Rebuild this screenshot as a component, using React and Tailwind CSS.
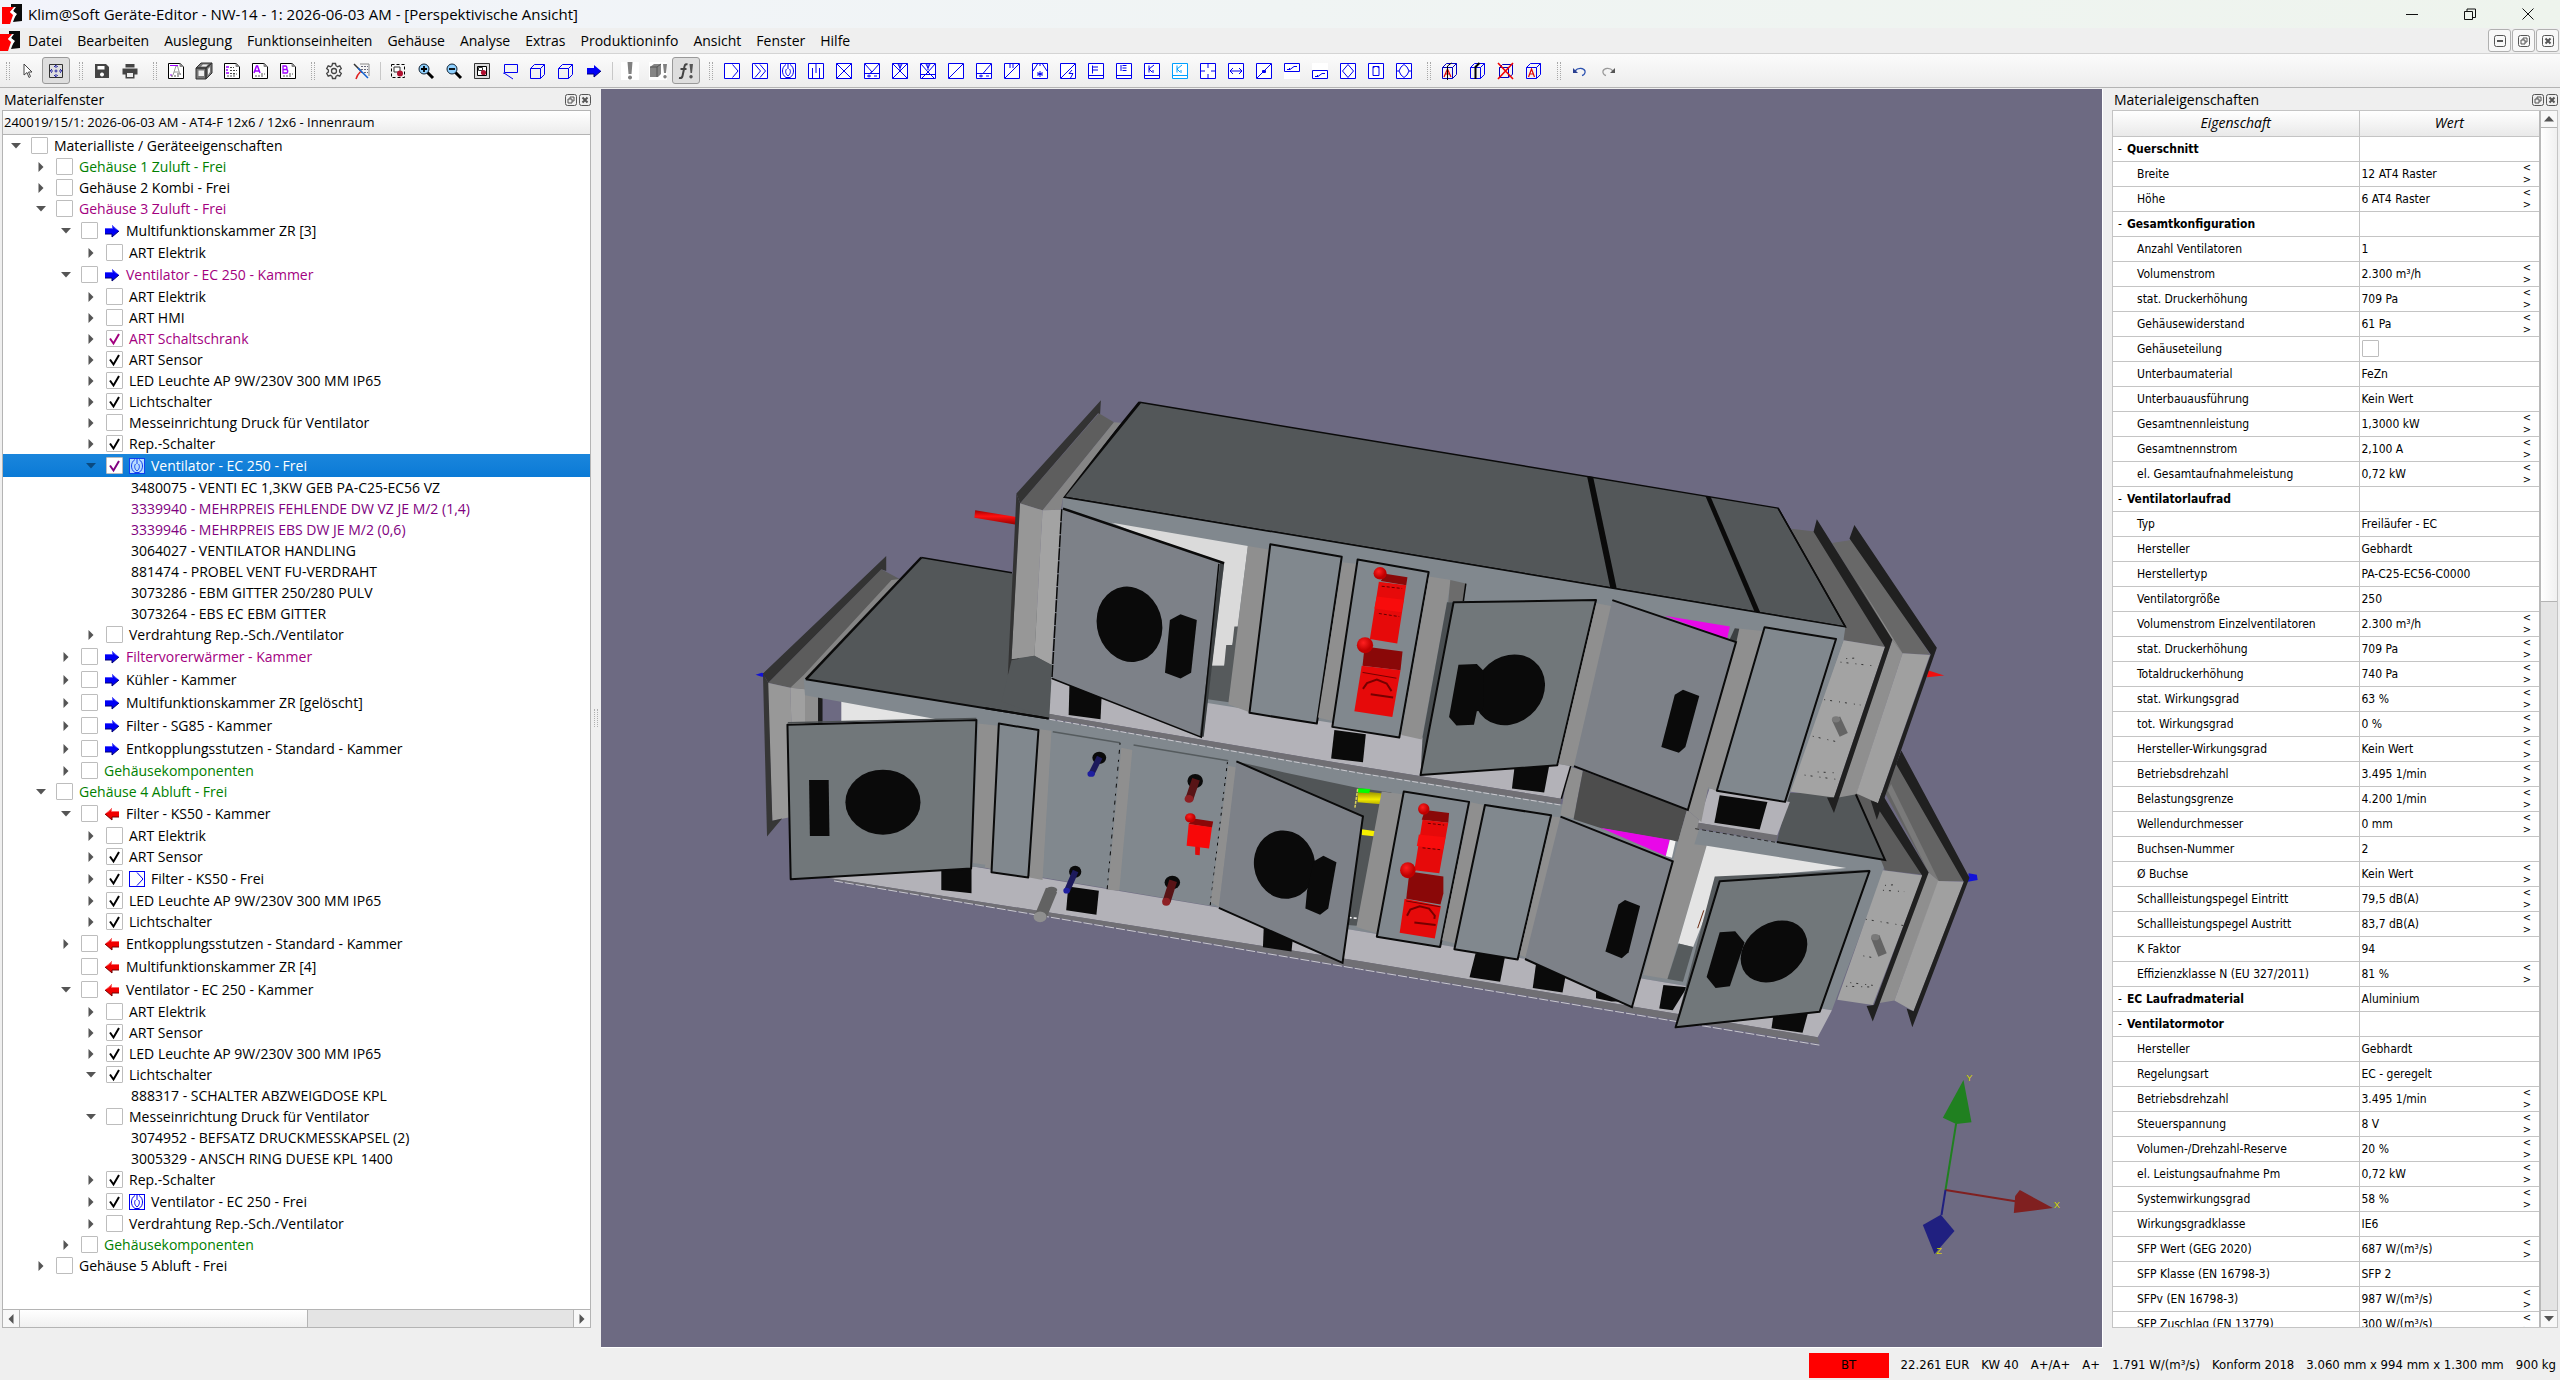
import React from "react";

const UI = "font-['Open_Sans','Noto_Sans',sans-serif]";
const TAHOMA = "font-['DejaVu_Sans_Condensed','DejaVu_Sans',sans-serif]";

/* ---------- tree ---------- */
const G = "text-[#008000]";
const P = "text-[#a3007f]";
const V = "text-[#800080]";

// level, text, options: a = arrow (o open, c closed), k = checked, i = icon, c = colour
const TREE = [
  [0, "Materialliste / Geräteeigenschaften", { a: "o" }],
  [1, "Gehäuse 1 Zuluft - Frei", { a: "c", c: G }],
  [1, "Gehäuse 2 Kombi - Frei", { a: "c" }],
  [1, "Gehäuse 3 Zuluft - Frei", { a: "o", c: P }],
  [2, "Multifunktionskammer ZR [3]", { a: "o", i: "right" }],
  [3, "ART Elektrik", { a: "c" }],
  [2, "Ventilator - EC 250 - Kammer", { a: "o", i: "right", c: P }],
  [3, "ART Elektrik", { a: "c" }],
  [3, "ART HMI", { a: "c" }],
  [3, "ART Schaltschrank", { a: "c", k: 1, c: P }],
  [3, "ART Sensor", { a: "c", k: 1 }],
  [3, "LED Leuchte AP 9W/230V 300 MM IP65", { a: "c", k: 1 }],
  [3, "Lichtschalter", { a: "c", k: 1 }],
  [3, "Messeinrichtung Druck für Ventilator", { a: "c" }],
  [3, "Rep.-Schalter", { a: "c", k: 1 }],
  [3, "Ventilator - EC 250 - Frei", { a: "o", k: 1, i: "fan", sel: 1 }],
  [4, "3480075 - VENTI EC 1,3KW GEB PA-C25-EC56 VZ", { leaf: 1 }],
  [4, "3339940 - MEHRPREIS FEHLENDE DW VZ JE M/2 (1,4)", { leaf: 1, c: V }],
  [4, "3339946 - MEHRPREIS EBS DW JE M/2 (0,6)", { leaf: 1, c: V }],
  [4, "3064027 - VENTILATOR HANDLING", { leaf: 1 }],
  [4, "881474 - PROBEL VENT FU-VERDRAHT", { leaf: 1 }],
  [4, "3073286 - EBM GITTER 250/280 PULV", { leaf: 1 }],
  [4, "3073264 - EBS EC EBM GITTER", { leaf: 1 }],
  [3, "Verdrahtung Rep.-Sch./Ventilator", { a: "c" }],
  [2, "Filtervorerwärmer - Kammer", { a: "c", i: "right", c: P }],
  [2, "Kühler - Kammer", { a: "c", i: "right" }],
  [2, "Multifunktionskammer ZR [gelöscht]", { a: "c", i: "right" }],
  [2, "Filter - SG85 - Kammer", { a: "c", i: "right" }],
  [2, "Entkopplungsstutzen - Standard - Kammer", { a: "c", i: "right" }],
  [2, "Gehäusekomponenten", { a: "c", c: G }],
  [1, "Gehäuse 4 Abluft - Frei", { a: "o", c: G }],
  [2, "Filter - KS50 - Kammer", { a: "o", i: "left" }],
  [3, "ART Elektrik", { a: "c" }],
  [3, "ART Sensor", { a: "c", k: 1 }],
  [3, "Filter - KS50 - Frei", { a: "c", k: 1, i: "filter" }],
  [3, "LED Leuchte AP 9W/230V 300 MM IP65", { a: "c", k: 1 }],
  [3, "Lichtschalter", { a: "c", k: 1 }],
  [2, "Entkopplungsstutzen - Standard - Kammer", { a: "c", i: "left" }],
  [2, "Multifunktionskammer ZR [4]", { i: "left" }],
  [2, "Ventilator - EC 250 - Kammer", { a: "o", i: "left" }],
  [3, "ART Elektrik", { a: "c" }],
  [3, "ART Sensor", { a: "c", k: 1 }],
  [3, "LED Leuchte AP 9W/230V 300 MM IP65", { a: "c", k: 1 }],
  [3, "Lichtschalter", { a: "o", k: 1 }],
  [4, "888317 - SCHALTER ABZWEIGDOSE KPL", { leaf: 1 }],
  [3, "Messeinrichtung Druck für Ventilator", { a: "o" }],
  [4, "3074952 - BEFSATZ DRUCKMESSKAPSEL (2)", { leaf: 1 }],
  [4, "3005329 - ANSCH RING DUESE KPL 1400", { leaf: 1 }],
  [3, "Rep.-Schalter", { a: "c", k: 1 }],
  [3, "Ventilator - EC 250 - Frei", { a: "c", k: 1, i: "fan" }],
  [3, "Verdrahtung Rep.-Sch./Ventilator", { a: "c" }],
  [2, "Gehäusekomponenten", { a: "c", c: G }],
  [1, "Gehäuse 5 Abluft - Frei", { a: "c" }],
];

const INDENT = ["pl-[1px]", "pl-[26px]", "pl-[51px]", "pl-[76px]", "pl-[128px]"];

function Tri({ dir, className = "fill-[#555]" }) {
  const d = { d: "M1 3h10L6 8.5z", r: "M3.5 1v10L8.5 6z", l: "M8.5 1v10L3.5 6z", u: "M1 8.5h10L6 3z" }[dir];
  return (
    <svg viewBox="0 0 12 12" className={"size-3 shrink-0 " + className}>
      <path d={d} />
    </svg>
  );
}

const FAN = "M6 1.500C3.500 3 2.500 5.500 2.500 8s1 5 3.500 6.500h4c2.500-1.500 3.500-4 3.500-6.500s-1-5-3.500-6.500M8 1v5M6.500 6C5 8 5.500 11 8 13c2.500-2 3-5 1.500-7";

function TreeIcon({ kind, sel }) {
  if (kind === "right" || kind === "left") {
    const c = kind === "right" ? ["#0000f5", "#000070", "#6a6aff"] : ["#f00000", "#700000", "#ff8080"];
    return (
      <svg viewBox="0 0 16 16" className="mr-[6px] size-4 shrink-0">
        <g transform={kind === "left" ? "matrix(-1 0 0 1 16 0)" : undefined}>
          <path d="M1 5h7V2l7 6-7 6v-3H1z" fill={c[0]} />
          <path d="M1 11h7v3l7-6" fill="none" stroke={c[1]} />
          <path d="M1 5.5h7.5V3l4 3.5" fill="none" stroke={c[2]} strokeWidth=".8" />
        </g>
      </svg>
    );
  }
  return (
    <svg viewBox="0 0 16 16" className="mr-[6px] size-4 shrink-0" fill="none" stroke={sel ? "#1040f0" : "#0000f0"}>
      <rect x=".5" y=".5" width="15" height="15" fill={sel ? "#b8dcff" : "#fff"} />
      {kind === "fan" ? <path d={FAN} /> : <path d="M8 1.5 14 8l-6 6.5" />}
    </svg>
  );
}

function Check({ checked, color, label }) {
  return (
    <span className="grid shrink-0">
      <input
        type="checkbox"
        defaultChecked={!!checked}
        aria-label={label}
        className="size-[17px] appearance-none rounded-[1px] border border-[#bdbdbd] bg-white [grid-area:1/1]"
      />
      {checked ? (
        <svg viewBox="0 0 17 17" className={"pointer-events-none size-[17px] [grid-area:1/1] " + color}>
          <path d="M4 8.5 7.5 13.5 13 4" fill="none" stroke="currentColor" strokeWidth="2" />
        </svg>
      ) : null}
    </span>
  );
}

function TreeRow({ row }) {
  const [lvl, text, o] = row;
  const h = o.i ? "h-[23px]" : "h-[21px]";
  return (
    <li
      className={
        "flex items-center whitespace-pre " + h + " " + INDENT[lvl] + " " +
        (o.sel ? "bg-gradient-to-b from-[#1a86dc] to-[#0a7ad6] text-white" : o.c || "text-black")
      }
    >
      {!o.leaf && (
        <>
          <span className="mr-[10px] flex w-[17px] justify-center pl-[6px]">
            {o.a && <Tri dir={o.a === "o" ? "d" : "r"} className={o.sel ? "fill-[#0a4a80]" : "fill-[#555]"} />}
          </span>
          <Check checked={o.k} label={text} color={o.c || (o.sel ? "text-[#800080]" : "text-black")} />
          <span className="w-[6px] shrink-0" />
          {o.i && <TreeIcon kind={o.i} sel={o.sel} />}
        </>
      )}
      <span>{text}</span>
    </li>
  );
}

/* ---------- properties: name, value, spinner ---------- */
const PROPS = [
  ["#Querschnitt", ""],
  ["Breite", "12 AT4 Raster", 1],
  ["Höhe", "6 AT4 Raster", 1],
  ["#Gesamtkonfiguration", ""],
  ["Anzahl Ventilatoren", "1"],
  ["Volumenstrom", "2.300 m³/h", 1],
  ["stat. Druckerhöhung", "709 Pa", 1],
  ["Gehäusewiderstand", "61 Pa", 1],
  ["Gehäuseteilung", "[]"],
  ["Unterbaumaterial", "FeZn"],
  ["Unterbauausführung", "Kein Wert"],
  ["Gesamtnennleistung", "1,3000 kW", 1],
  ["Gesamtnennstrom", "2,100 A", 1],
  ["el. Gesamtaufnahmeleistung", "0,72 kW", 1],
  ["#Ventilatorlaufrad", ""],
  ["Typ", "Freiläufer - EC"],
  ["Hersteller", "Gebhardt"],
  ["Herstellertyp", "PA-C25-EC56-C0000"],
  ["Ventilatorgröße", "250"],
  ["Volumenstrom Einzelventilatoren", "2.300 m³/h", 1],
  ["stat. Druckerhöhung", "709 Pa", 1],
  ["Totaldruckerhöhung", "740 Pa", 1],
  ["stat. Wirkungsgrad", "63 %", 1],
  ["tot. Wirkungsgrad", "0 %", 1],
  ["Hersteller-Wirkungsgrad", "Kein Wert", 1],
  ["Betriebsdrehzahl", "3.495 1/min", 1],
  ["Belastungsgrenze", "4.200 1/min", 1],
  ["Wellendurchmesser", "0 mm", 1],
  ["Buchsen-Nummer", "2"],
  ["Ø Buchse", "Kein Wert", 1],
  ["Schallleistungspegel Eintritt", "79,5 dB(A)", 1],
  ["Schallleistungspegel Austritt", "83,7 dB(A)", 1],
  ["K Faktor", "94"],
  ["Effizienzklasse N (EU 327/2011)", "81 %", 1],
  ["#EC Laufradmaterial", "Aluminium"],
  ["#Ventilatormotor", ""],
  ["Hersteller", "Gebhardt"],
  ["Regelungsart", "EC - geregelt"],
  ["Betriebsdrehzahl", "3.495 1/min", 1],
  ["Steuerspannung", "8 V", 1],
  ["Volumen-/Drehzahl-Reserve", "20 %", 1],
  ["el. Leistungsaufnahme Pm", "0,72 kW", 1],
  ["Systemwirkungsgrad", "58 %", 1],
  ["Wirkungsgradklasse", "IE6"],
  ["SFP Wert (GEG 2020)", "687 W/(m³/s)", 1],
  ["SFP Klasse (EN 16798-3)", "SFP 2"],
  ["SFPv (EN 16798-3)", "987 W/(m³/s)", 1],
  ["SFP Zuschlag (EN 13779)", "300 W/(m³/s)", 1],
];

function PropTable() {
  return (
    <table className={"w-full table-fixed border-collapse text-[12px] leading-[24px] " + TAHOMA}>
      <colgroup>
        <col className="w-[246px]" />
        <col />
      </colgroup>
      <thead>
        <tr className={"h-[25px] bg-gradient-to-b from-white to-[#e9e9e9] text-[14px] italic " + UI}>
          <th className="border-r border-b border-[#c4c4c4] p-0 font-normal">Eigenschaft</th>
          <th className="border-b border-[#c4c4c4] p-0 font-normal">Wert</th>
        </tr>
      </thead>
      <tbody>
        {PROPS.map(([n, v, s], i) => {
          const head = n[0] === "#";
          return (
            <tr key={i} className="h-[25px] border-b border-[#c4c4c4]">
              <th scope="row" className="border-r border-[#c4c4c4] p-0 text-left font-normal whitespace-nowrap">
                {head ? (
                  <span className="flex gap-[5px] pl-[5px]">
                    <span>-</span>
                    <b>{n.slice(1)}</b>
                  </span>
                ) : (
                  <span className="block pl-[24px]">{n}</span>
                )}
              </th>
              <td className="p-0 whitespace-nowrap">
                <div className="flex h-[24px] items-center justify-between pr-[7px] pl-[2px]">
                  {v === "[]" ? <Check label={n} /> : <span>{v}</span>}
                  {s && (
                    <span className="flex w-[10px] flex-col text-[11px] leading-[12px]">
                      <button aria-label={n + " verringern"}>&lt;</button>
                      <button aria-label={n + " erhöhen"}>&gt;</button>
                    </span>
                  )}
                </div>
              </td>
            </tr>
          );
        })}
      </tbody>
    </table>
  );
}

/* ---------- toolbar icons ---------- */
const BOX = "M.5.5h15v15H.5z";
const BLUE = [
  BOX + "M8.500 1.500 14 8l-5.500 6.500",
  BOX + "M3 1.500 8.500 8 3 14.500M8 1.500 13.500 8 8 14.500",
  BOX + FAN,
  BOX + "M4.500 8v7M8 1v9M11.500 8v7M4.500 8V5M11.500 8V5",
  BOX + "M.5.5l15 15M15.500.5l-15 15",
  BOX + "M1 1l7 8 7-8M8 9l-2.500 1.500M1 10.500h14M3 13h4M5 11.500v3M10 13h3",
  BOX + "M.5.5l15 15M15.500.5l-15 15M6 1l2 4 2-4M8 1v6",
  BOX + "M1 1l7 8 7-8M8 9l-6 6M8 9l6 6M1 11.500h14M6 1l2 4 2-4M8 1v6",
  BOX + "M15 1L1 15",
  BOX + "M15 1L7 10.500M1 10.500h14M3 13h4M5 11.500v3M10 13h3",
  BOX + "M15 1L1 15M6 1v4M9 1v4",
  BOX + "M5.500 1 1 8M10.500 1 15 8M8 1v2M8 8v6M5.500 9.500l5 3M10.500 9.500l-5 3M5 11h6",
  BOX + "M15 1L1 15M12 7l-3 3.500h4L10.500 15",
  BOX + "M1 12.500h14M4.500 2.500v8M4.500 4H10M4.500 7H10",
  BOX + "M1 12.500h14M6.500 2.500h4M6.500 5h4M6.500 7.500h4M5 2v6",
  BOX + "M1 12.500h14M5 2.500v7M5 6l5-4M5 6l3 3M9 7v3",
  BOX + "M1 12.500h14M5 2.500v7M5 6l5-4M5 6l3 3M9 7v3",
  BOX + "M8 1v4M8 11v4M1 8h4M11 8h4",
  BOX + "M2 8h12M5 5 2 8l3 3M11 5l3 3-3 3",
  BOX + "M15 1L1 15M6.500 7.500h3v2h-3zM7 8.500h2",
  "M.5.5h15v8H.5zM3 6.500h3L10 3.500h3M5 6l1-1",
  "M.5 7.500h15v8H.5zM3 13.500h3L10 10.500h3M5 13l1-1",
  BOX + "M8 1.500 13.500 8 8 14.500 2.500 8z",
  BOX + "M5 3.500h6v9H5zM5 5l2-1.500M11 5 9 3.500",
  BOX + "M8 1.500 5 4 3 8l2 4 3 2.500L11 12l2-4-2-4zM1 8h2M13 8h2",
];

const S = ({ children, ...p }) => (
  <svg viewBox="0 0 18 18" className="size-[18px]" fill="none" {...p}>
    {children}
  </svg>
);

const Doc = ({ letter, gray }) => (
  <S>
    <path d="M1.500 1.500h12l3 3v12h-15z" fill="#fff" stroke="#000" />
    <path d="M13 1.500v3h3.500z" fill="#888" stroke="#888" />
    {letter === "A" && <path d="M3 11 5.500 4h1L9 11M4 9h4" stroke="#a000ff" strokeWidth="1.500" />}
    {letter === "B" && <path d="M4 11V4h3q2 2 0 3.500H4h4q1.500 2 0 3.500z" stroke="#a000ff" strokeWidth="1.300" />}
    {gray && <path d="M6 13l3-9h1.500L13 13M7 10h5" stroke="#999" />}
    {gray && <path d="M3 3.500h8M3 13h2" stroke="#a000ff" />}
    {!letter && !gray && <path d="M3 5h3M3 8h2M3 11h3" stroke="#a000ff" strokeWidth="1.500" />}
    {!letter && !gray && <path d="M7 5.500h4M7 8.500h7M7 11.500h6" stroke="#444" strokeDasharray="2 1" />}
    <path d="M4 14h9M10 12h4" stroke="#555" strokeDasharray="2 1" />
  </S>
);

const Cube = ({ stroke = "#0000f0", ...p }) => (
  <S {...p}>
    <path d="M1.500 6.500h10v10h-10zM1.500 6.500l4-4h10v10l-4 4M11.500 6.500l4-4" stroke={stroke} />
  </S>
);

const Glass = ({ plus }) => (
  <S>
    <path d="M10.500 10.500 16 16" stroke="#000" strokeWidth="3" />
    <circle cx="7" cy="7" r="5" fill="#8ed0ff" stroke="#123" />
    <path d={plus ? "M4 7h6M7 4v6" : "M4 7h6"} stroke="#000" strokeWidth="1.800" />
  </S>
);

const ICONS = {
  cursor: <S><path d="M5 2v11l3-2.500 2 5 1.500-1-2-4.500h3.500z" fill="#fff" stroke="#444" /></S>,
  move: <S><path d="M2.500 2.500h13v13h-13z" stroke="#333" /><path d="M9 3v12M3 9h12M7 5l2-2 2 2M7 13l2 2 2-2M5 7 3 9l2 2M13 7l2 2-2 2" stroke="#2222a0" strokeDasharray="3 1.500" /></S>,
  save: <S><path d="M2 2h11l3 3v11H2z" fill="#444" /><path d="M4.500 4h7v3.500h-7zM9 10.500a2 2 0 1 0 .01 0" fill="#fff" /></S>,
  print: <S><path d="M4.500 2h9v3.500h-9zM1.500 6.500h15v6h-3v4h-9v-4h-3z" fill="#444" /><path d="M6 11h6v4H6z" fill="#eee" /></S>,
  solid: <S><path d="M1 6h10v11H1zM1 6l5-5h11l-6 5zM11 17V6l6-5v10z" fill="#777" stroke="#333" /><path d="M3.500 8.500H9V14H3.500zM6 4.500l2-2h5l-2 2zM13 13V7l2-2v5z" fill="#eee" /></S>,
  gear: <S stroke="#444" strokeWidth="1.300"><path d="M7.500 1.500h3l.5 2.200 1.600 1 2.200-.8 1.500 2.600-1.700 1.500v2l1.700 1.500-1.500 2.600-2.200-.8-1.600 1-.5 2.200h-3L7 14.300l-1.600-1-2.200.8-1.500-2.600L3.400 10V8L1.700 6.500l1.500-2.600 2.200.8 1.600-1z" /><circle cx="9" cy="9" r="2.500" /></S>,
  wires: <S><path d="M7 2h9v12" stroke="#888" /><path d="M8 4.500h7M8 7.500h7M8 10.500h7" stroke="#667" strokeDasharray="2 1" /><path d="M1 2l7 7" stroke="#333" strokeWidth="1.500" /><path d="M8 9c-2 2-4 4-5 8" stroke="#e02020" strokeWidth="1.500" /><path d="M5 6l10 10" stroke="#1060d0" strokeWidth="1.500" /></S>,
  fit: <S><path d="M2.500 2.500h13v13h-13z" stroke="#000" strokeDasharray="3 2" /><path d="M5 5h6v5H5z" fill="#fff" stroke="#333" /><circle cx="11" cy="11.500" r="3" fill="#b01030" /></S>,
  sheet: <S><path d="M1.500 1.500h15v15h-15z" fill="#ddd" stroke="#333" /><path d="M4.500 4.500h9v9h-9z" fill="#fff" stroke="#000" /><path d="M5.500 5.500h4v3h-4z" fill="#fff" stroke="#333" /><circle cx="10.500" cy="10.500" r="2.600" fill="#b01030" /></S>,
  plane: <S stroke="#0000f0"><path d="M3.500 2.500h13v8h-13zM3 11l9 6M3 10.500v1.500" /></S>,
  arrow: <S><path d="M2 6h7V3l7 6-7 6v-3H2z" fill="#0000f5" /><path d="M2 12h7v3l7-6" stroke="#000070" /></S>,
  bang: <S><path d="M0 0h18v18H0z" fill="#fff" /><path d="M6.500 0h5l-1 12H7.500zM9 13.500a2 2 0 1 0 .01 0" fill="#808080" /></S>,
  cubebang: <S><path d="M0 0h18v18H0z" fill="#fff" /><path d="M1 5l4-3h7v10l-3 3H1z" fill="#858585" /><path d="M1 5h7v10M8 5l4-3" stroke="#555" /><path d="M14 2h4l-1 9h-2zM16 13a1.700 1.700 0 1 0 .01 0" fill="#808080" /></S>,
  fbang: <S><path d="M10.500 2.500C8 1.500 7.500 3.500 7 7L5.500 14q-.5 2.500-3.500 2M3.500 7h6" stroke="#444" strokeWidth="2" /><path d="M12.500 2h3.500l-1 9h-1.500zM14 13a1.700 1.700 0 1 0 .01 0" fill="#555" /></S>,
  ca: <S><path d="M1.500 5.500h10v11h-10zM1.500 5.500l4-4h10v11l-4 4M11.500 5.500l4-4" stroke="#0000c0" /><path d="M3 15 6.500 7 10 15M4 12h5" stroke="#e00000" strokeWidth="1.200" /><path d="M6.500 4v14M6.500 4l4-3" stroke="#000" /></S>,
  cb: <S><path d="M1.500 5.500h10v11h-10zM1.500 5.500l4-4h10v11l-4 4M11.500 5.500l4-4" stroke="#0000f0" /><path d="M6.500 17V5l4-4" stroke="#000" strokeWidth="2" /></S>,
  cx: <S><path d="M2.500 5.500h9v10h-9zM2.500 5.500l3-3h10v10l-4 3" stroke="#0000c0" /><path d="M1 1l15 16M16 1 1 17" stroke="#f00000" strokeWidth="1.600" /></S>,
  cr: <S><path d="M1.500 5.500h10v11h-10zM1.500 5.500l4-4h10v11l-4 4M11.500 5.500l4-4" stroke="#0000f0" /><path d="M3.500 15 6.500 7 9.500 15M4.500 12h4" stroke="#e00000" strokeWidth="1.200" /></S>,
  undo: <S><path d="M4 9c3-4 9-3 10 0 .5 2-1 4-3 4.500" stroke="#2a50b0" strokeWidth="1.300" /><path d="M2 6v5h5z" fill="#2a3f90" /></S>,
  redo: <S><path d="M14 9C11 5 5 6 4 9c-.5 2 1 4 3 4.500" stroke="#999" strokeWidth="1.300" /><path d="M16 6v5h-5z" fill="#555" /></S>,
};

const Tool = ({ label, active, children }) => (
  <button
    aria-label={label}
    className={
      "flex h-[27px] w-[28px] shrink-0 items-center justify-center " +
      (active ? "rounded-[3px] border border-[#9a9a9a] bg-[#dedede]" : "")
    }
  >
    {children}
  </button>
);

const Grip = () => (
  <span className="flex w-[18px] shrink-0 justify-end pr-[5px]">
    <span className="h-[18px] w-[4px] border-x border-dotted border-[#a8a8a8]" />
  </span>
);
const Sep = () => (
  <span className="flex w-[8px] shrink-0 justify-center">
    <span className="h-[18px] w-px bg-[#c8c8c8]" />
  </span>
);

function Toolbar() {
  return (
    <div className="flex h-[35px] shrink-0 items-center overflow-hidden border-t border-b border-t-[#d4d4d4] border-b-[#b4b4b4] bg-gradient-to-b from-[#fbfbfb] to-[#ededed]">
      <span className="flex w-[14px] shrink-0 justify-end pr-[4px]">
        <span className="h-[18px] w-[4px] border-x border-dotted border-[#a8a8a8]" />
      </span>
      <Tool label="Auswahl">{ICONS.cursor}</Tool>
      <Tool label="Verschieben" active>{ICONS.move}</Tool>
      <Grip />
      <Tool label="Speichern">{ICONS.save}</Tool>
      <Tool label="Drucken">{ICONS.print}</Tool>
      <Grip />
      <Tool label="Deckblatt"><Doc gray /></Tool>
      <Tool label="Modell">{ICONS.solid}</Tool>
      <Tool label="Liste"><Doc /></Tool>
      <Tool label="Dokument A"><Doc letter="A" /></Tool>
      <Tool label="Dokument B"><Doc letter="B" /></Tool>
      <Grip />
      <Tool label="Einstellungen">{ICONS.gear}</Tool>
      <Tool label="Verdrahtung">{ICONS.wires}</Tool>
      <Sep />
      <Tool label="Einpassen">{ICONS.fit}</Tool>
      <Tool label="Vergrößern"><Glass plus /></Tool>
      <Tool label="Verkleinern"><Glass /></Tool>
      <Tool label="Blatt">{ICONS.sheet}</Tool>
      <Tool label="Ebene">{ICONS.plane}</Tool>
      <Tool label="Quader links"><Cube /></Tool>
      <Tool label="Quader rechts"><Cube /></Tool>
      <Tool label="Richtung">{ICONS.arrow}</Tool>
      <Sep />
      <Tool label="Hinweis">{ICONS.bang}</Tool>
      <Tool label="Geometriehinweis">{ICONS.cubebang}</Tool>
      <Tool label="Funktionshinweis" active>{ICONS.fbang}</Tool>
      <Grip />
      {BLUE.map((d, i) => (
        <Tool key={i} label={"Funktionseinheit " + (i + 1)}>
          <svg viewBox="0 0 16 16" className="size-4" fill="none" stroke={i === 16 ? "#00a0ff" : "#0000f0"}>
            <path d="M0 0h16v16H0z" fill="#fff" stroke="none" />
            <path d={d} />
          </svg>
        </Tool>
      ))}
      <Grip />
      <Tool label="Gehäuse A">{ICONS.ca}</Tool>
      <Tool label="Gehäuse teilen">{ICONS.cb}</Tool>
      <Tool label="Gehäuse löschen">{ICONS.cx}</Tool>
      <Tool label="Gehäuse R">{ICONS.cr}</Tool>
      <Grip />
      <Tool label="Rückgängig">{ICONS.undo}</Tool>
      <Tool label="Wiederholen">{ICONS.redo}</Tool>
    </div>
  );
}

/* ---------- 3D view ---------- */
const F = ({ p, c, s, w = 2 }) => (
  <polygon points={p} fill={c} stroke={s} strokeWidth={s ? w : 0} vectorEffect="non-scaling-stroke" strokeLinejoin="round" />
);
const L = ({ p, s = "#0a0a0a", w = 1.5, d }) => (
  <polyline points={p} fill="none" stroke={s} strokeWidth={w} strokeDasharray={d} vectorEffect="non-scaling-stroke" />
);
const E = ({ x, y, rx, ry, r = 0, c = "#0a0a0a" }) => (
  <ellipse cx={x} cy={y} rx={rx} ry={ry} fill={c} transform={`rotate(${r} ${x} ${y})`} />
);
const BK = "#0a0a0a";
const FACE = "#81888e";
const DOOR = "#7d8188";
const DOORW = "#71777a";
const ROOF = "#535759";
const POST = "#8f8f8f";
const BASE = "#b3b2b8";
const RAIL = "#706f74";
const WHITE = "#e4e4e4";

// Left half and right half of the device use their own drawing grids.
const Left = ({ children }) => <g transform="translate(140 291) scale(.408163 .357143)">{children}</g>;
const Right = ({ children }) => <g transform="translate(760 291) scale(.408163 .446429)">{children}</g>;

const Dots = ({ list }) => list.map((p, i) => <L key={i} p={p} s="#333" w={1} d="1 5 2 7" />);

function Scene() {
  return (
    <svg viewBox="0 0 1502 1258" preserveAspectRatio="xMidYMid slice" className="block size-full" role="img" aria-label="Perspektivische Ansicht">
      <defs>
        <linearGradient id="redPipe" x1="0" y1="0" x2="0" y2="1">
          <stop offset="0" stopColor="#a00000" />
          <stop offset=".4" stopColor="#ff1010" />
          <stop offset="1" stopColor="#900000" />
        </linearGradient>
        <linearGradient id="yellowPipe" x1="0" y1="0" x2="0" y2="1">
          <stop offset="0" stopColor="#8c8600" />
          <stop offset=".6" stopColor="#f2ea00" />
          <stop offset="1" stopColor="#b0a800" />
        </linearGradient>
        <radialGradient id="ball" cx=".4" cy=".35">
          <stop offset="0" stopColor="#ff2020" />
          <stop offset="1" stopColor="#c00000" />
        </radialGradient>
      </defs>

      <Left>
        {/* lower left connection */}
        <F p="37,825 52,820 66,822 66,834 50,830" c="#1212d8" />
        <F p="68,848 345,530 390,557 165,835 158,866 122,862" c="#5c5c5c" />
        <F p="122,862 155,826 370,560 390,557 165,835 158,866" c="#858585" />
        <F p="55,822 357,493 357,535 345,530 68,848" c="#333" />
        <F p="66,848 122,862 125,970 118,1225 78,1234" c="#989898" />
        <F p="122,862 158,866 158,970 125,970" c="#a0a0a0" />
        <F p="158,880 190,886 190,962 158,964" c={POST} />
        <F p="190,886 201,888 201,960 190,962" c="#1c1c1c" />
        <F p="55,822 68,848 78,1234 102,1228 65,1278" c="#363636" />
        <F p="247,897 505,948 247,958" c={WHITE} />
        <F p="160,838 443,497 665,540 760,700 770,950" c={ROOF} />
      </Left>
      <Right>
        {/* lower front and base */}
        <F p="-1364,670 -764,760 490,950 820,1005 1285,1075 1280,1105 1155,1412 0,1235 -949,1088 -947,775 -1361,706" c={FACE} />
        <F p="-1314,1114 -949,1090 0,1235 1155,1412 1120,1472 0,1302" c={BASE} />
        <F p="-1314,1114 0,1302 1120,1472 1125,1487 0,1318 -1270,1124" c={RAIL} />
        <L p="-1290,1122 0,1320 1125,1490" s="#c9c8ce" w={1} d="9 2" />
      </Right>
      <Left>
        <L p="443,497 665,540" />
        <L p="443,497 160,838" w={2.5} />
        <L p="160,838 755,948" w={2} />
        <F p="583,962 630,968 615,1370 568,1355" c={POST} />
        <F p="565,1352 600,1357 598,1366 565,1362" c={FACE} />
        <F p="732,978 762,982 740,1400 708,1393" c={POST} />
        <L p="765,985 930,1016" s="#555b5e" />
        <L p="930,1016 898,1430" w={1} d="2 5 4 6" />
        <F p="933,1030 960,1036 928,1430 900,1427" c={POST} />
        <L p="963,1022 1195,1066" s="#555b5e" />
        <L p="1193,1070 1150,1478" w={1} d="2 4 3 6" />
        <F p="1195,1080 1215,1085 1172,1475 1152,1462" c={POST} />
        <F p="492,1372 566,1366 566,1437 492,1428" c={BK} />
        <F p="803,1418 878,1430 872,1497 798,1485" c={BK} />
        <F p="1282,1530 1355,1542 1350,1600 1280,1588" c={BK} />
        <F p="1215,1068 1330,1098 1510,1142 1595,1155 1510,1528 1480,1525" c="#515557" />
        <F p="1512,1150 1592,1160 1592,1190 1512,1182" c="url(#yellowPipe)" />
        <F p="1513,1143 1543,1145 1540,1157 1513,1155" c="#00ff00" />
        <L p="1512,1145 1505,1200" s="#d8d060" d="3 1" />
        <F p="1522,1258 1575,1266 1575,1280 1522,1274" c="#f5ee00" />
        <L p="1490,1505 1514,1508" s="#fff" d="3 2" />
        <F p="115,965 578,952 565,1368 123,1398" c={DOORW} s={BK} w={2} />
        <L p="116,960 578,948" s="#4c5052" />
        <E x={349} y={1182} rx={92} ry={91} />
        <F p="168,1120 216,1120 218,1277 170,1277" c={BK} />
        <F p="633,962 730,980 705,1393 615,1378" c={FACE} s={BK} />
        <F p="1215,1068 1525,1222 1475,1632 1172,1478" c={DOOR} />
        <L p="1215,1068 1525,1222 1475,1632 1172,1478" w={2} />
        <E x={1333} y={1357} rx={75} ry={96} r={-6} />
        <F p="1404,1348 1428,1332 1460,1350 1440,1480 1420,1497 1384,1480 1388,1430" c={BK} />
        {/* pipe stubs */}
        <E x={879} y={1058} rx={17} ry={17} />
        <L p="880,1056 860,1102" s="#1d1a5c" w={6} />
        <E x={859} y={1103} rx={9} ry={8} c="#1e1ea0" />
        <E x={820} y={1377} rx={15} ry={17} />
        <L p="821,1375 800,1430" s="#1d1a5c" w={6} />
        <E x={799} y={1430} rx={8} ry={8} c="#1e1ea0" />
        <E x={1114} y={1123} rx={19} ry={20} />
        <L p="1116,1118 1100,1172" s="#581416" w={8} />
        <E x={1099} y={1173} rx={11} ry={11} c="#8e2024" />
        <E x={1058} y={1407} rx={19} ry={19} />
        <L p="1060,1402 1044,1460" s="#581416" w={8} />
        <E x={1043} y={1461} rx={10} ry={11} c="#8e2024" />
        <L p="762,1428 736,1500" s="#626262" w={12} />
        <E x={762} y={1428} rx={14} ry={9} c="#626262" />
        <E x={734} y={1503} rx={16} ry={15} c="#8f8f8f" />
        <F p="1110,1228 1158,1236 1155,1254 1098,1243" c="#8a0808" />
        <F p="1098,1243 1155,1252 1148,1312 1093,1304" c="#f80808" />
        <F p="1114,1306 1126,1308 1125,1331 1114,1329" c="#e00808" />
        <E x={1102} y={1226} rx={13} ry={13} c="url(#ball)" />
      </Left>

      <Right>
        {/* lower bays, right */}
        <F p="52,922 103,928 42,1240 -10,1225" c={POST} />
        <F p="282,1284 354,1292 342,1348 267,1338" c={BK} />
        <F p="430,1308 502,1337 495,1372 422,1362" c={BK} />
        <F p="577,1370 640,1392 615,1392 577,1385" c={BK} />
        <F p="742,1355 800,1360 765,1412 732,1408" c={BK} />
        <F p="1012,1420 1098,1412 1083,1462 1007,1452" c={BK} />
        <F p="106,922 266,945 195,1270 40,1247" c={FACE} s={BK} />
        <F p="158,963 217,970 215,992 150,985" c="#8a0808" />
        <F p="152,985 215,992 193,1105 132,1098" c="#e60a0a" />
        <F p="143,1018 208,1024 202,1052 138,1044" c="#f80c0c" />
        <L p="152,1048 195,1052" s="#600" w={1} d="3 2" />
        <L p="165,993 205,997" s="#600" w={1} d="3 2" />
        <F p="120,1101 203,1112 203,1150 196,1175 112,1162" c="#8a0808" />
        <F p="108,1162 197,1178 182,1251 96,1238" c="#e60a0a" />
        <L p="112,1167 195,1180" s="#700" w={1} />
        <L p="114,1200 122,1186 145,1179 168,1184 182,1200 181,1207" s="#700" w={2} />
        <L p="132,1215 184,1221" s="#700" w={2} />
        <E x={155} y={961} rx={14} ry={13} c="url(#ball)" />
        <E x={116} y={1098} rx={19} ry={18} c="url(#ball)" />
        <F p="270,946 302,952 232,1262 200,1255" c={POST} />
        <F p="305,952 467,975 385,1298 230,1275" c={FACE} s={BK} />
        <F p="470,978 495,980 410,1295 390,1288" c={POST} />
        <F p="510,865 545,875 522,982 490,975" c={POST} />
        <F p="545,875 800,962 778,1034 590,1004 522,984" c="#4d4d4d" />
        <F p="588,1003 758,1030 748,1066" c="#e808e8" />
        <F p="758,1030 772,1033 763,1070 748,1066" c="#f2f2f2" />
        <F p="800,962 835,990 818,1040 848,1043 752,1342 693,1333 765,1078" c={POST} />
        <F p="490,978 765,1078 665,1405 403,1297" c={DOOR} />
        <L p="490,978 765,1078 665,1405 403,1297" w={2} />
        <F p="648,1165 685,1178 657,1282 640,1295 600,1280 632,1175" c={BK} />
        <F p="848,1043 1190,1093 880,1118 815,1270 778,1262" c={WHITE} />
        <F p="780,1262 815,1270 790,1348 752,1342" c="#565b5d" />
        <L p="841,1188 826,1228" s="#6b2a10" w={1} />
        <F p="868,1112 1247,1097 1125,1415 770,1452" c="#565b5e" />
        <F p="880,1123 1247,1100 1125,1415 772,1450" c={DOORW} s={BK} />
        <E x={1013} y={1280} rx={86} ry={64} r={-28} />
        <F p="880,1237 918,1235 941,1260 905,1358 870,1362 848,1337" c={BK} />

        {/* lower right connection */}
        <F p="1490,1105 1510,1108 1512,1120 1488,1124" c="#1212d8" />
        <F p="1210,925 1260,925 1378,1108 1285,1098" c="#5c5c5c" />
        <F p="1280,1098 1378,1110 1255,1400 1168,1388" c="#a3a3a3" />
        <F p="1285,925 1315,855 1480,1122 1415,1122 1390,1100" c="#646464" />
        <F p="1292,920 1300,905 1417,1122 1392,1103" c="#7a7a7a" />
        <F p="1392,1103 1417,1122 1308,1390 1268,1396 1385,1110" c="#8f8f8f" />
        <F p="1415,1122 1478,1124 1355,1414 1308,1390" c="#a0a0a0" />
        <F p="1250,935 1272,918 1392,1103 1255,1437 1240,1402 1258,1400 1376,1110" c="#202020" />
        <F p="1325,830 1492,1115 1352,1450 1338,1408 1355,1414 1478,1124 1312,860" c="#202020" />
        <Dots list={["1280,1143 1332,1146", "1285,1132 1320,1130", "1238,1208 1330,1222", "1232,1290 1262,1295", "1190,1358 1262,1360", "1200,1350 1255,1356"]} />
        <L p="1261,1247 1279,1288" s="#646464" w={9} />
        <E x={1261} y={1248} rx={10} ry={7} c="#7a7a7a" />
        <F p="1050,925 1212,925 1285,1075 1020,1035" c={ROOF} />
        <L p="1212,925 1285,1075 1020,1035" w={2} />

        {/* upper right connection */}
        <F p="1390,650 1430,662 1388,666" c="#f01010" />
        <F p="1055,333 1118,340 1285,598 1185,583" c="#626262" />
        <F p="1183,583 1285,598 1160,935 1050,922" c="#a3a3a3" />
        <F p="1155,365 1210,357 1395,615 1328,612 1300,580" c="#686868" />
        <F p="1210,440 1328,612 1303,582" c="#8a8a8a" />
        <F p="1303,582 1328,612 1215,928 1168,936" c="#8f8f8f" />
        <F p="1328,612 1395,616 1268,948 1215,926" c="#a0a0a0" />
        <F p="1118,312 1303,582 1160,970 1143,935 1160,935 1285,598 1110,340" c="#202020" />
        <F p="1210,325 1412,600 1265,985 1250,942 1268,948 1397,615 1198,355" c="#202020" />
        <Dots list={["1176,632 1255,640", "1190,624 1210,623", "1136,716 1225,728", "1108,798 1175,812", "1088,885 1170,895", "1120,878 1165,880"]} />
        <L p="1165,758 1184,795" s="#646464" w={9} />
        <E x={1165} y={760} rx={10} ry={7} c="#7a7a7a" />

        {/* upper housing */}
        <F p="-729,262 -541,50 1023,287 1188,553" c={ROOF} s={BK} w={1.5} />
        <L p="-541,50 -729,262" w={3} />
        <F p="555,215 570,217 628,468 612,466" c={BK} />
        <F p="845,260 858,262 980,522 966,520" c={BK} />
        <F p="-729,262 1188,553 1183,585 1045,945 870,920 510,865 -759,675 -731,290" c={FACE} />
        <L p="-729,262 1188,553 1023,287" w={1.5} />
        <F p="-757,668 150,800 515,865 492,938 0,866 -762,748" c={BASE} />
        <F p="-762,748 0,866 492,938 490,950 0,879 -762,758" c={RAIL} />
        <L p="-762,760 0,881 490,952" s="#c9c8ce" w={1} d="6 2" />
        <L p="515,865 492,938" w={1.5} />
        <F p="855,915 1052,945 1020,1022 828,992" c={BASE} />
        <F p="828,992 1022,1020 1018,1034 825,1004" c={RAIL} />
        <L p="820,1005 1020,1036" s="#2a2a2a" w={1} d="4 3" />
        <F p="378,862 463,860 450,924 371,915" c={BK} />
        <F p="880,930 997,945 978,1007 867,992" c={BK} />
      </Right>

      <Left>
        {/* upper left connection */}
        <F p="575,365 680,384 680,406 573,386" c="url(#redPipe)" />
        <F p="685,345 878,93 915,118 740,365" c="#5e5e5e" />
        <F p="740,365 915,118 932,120 790,330 785,363" c="#858585" />
        <F p="676,318 883,57 881,95 876,93 685,345" c="#333" />
        <F p="684,345 740,365 720,772 664,782" c="#979797" />
        <F p="740,365 787,363 762,797 720,772" c="#a3a3a3" />
        <F p="676,318 685,345 664,782 683,780 655,825" c="#333" />
        <F p="664,785 720,772 760,797 760,840 755,948 640,900" c={ROOF} />
        <L p="600,919 755,948" w={2} />
        {/* upper bays */}
        <F p="806,850 885,880 882,950 804,938" c={BK} />
        <F p="1455,980 1532,992 1525,1070 1447,1060" c={BK} />
        <F p="910,400 1243,465 1218,690 1205,740 1185,800 1150,800 1150,515" c="#dadada" />
        <F p="1210,690 1222,690 1197,902 1140,893 1150,800 1185,800 1190,742 1205,742" c="#565a5c" />
        <F p="1243,465 1298,475 1247,930 1195,908" c={POST} />
        <F p="1298,460 1473,495 1412,962 1247,932" c={FACE} s={BK} />
        <F p="1475,510 1512,515 1450,955 1415,945" c={POST} />
        <F p="790,360 1185,513 1133,1000 763,836" c={DOOR} />
        <L p="1180,513 1130,998" s="#3c4042" w={4} />
        <L p="790,360 1185,513" w={2.5} />
        <L p="1172,515 1129,1000 763,836" w={1.5} />
        <L p="787,362 763,836" w={1.5} d="12 1" />
        <E x={953} y={684} rx={80} ry={106} r={-8} />
        <F p="1052,672 1078,656 1118,672 1104,820 1078,836 1040,820" c={BK} />
      </Left>
      <Right>
        <F p="-7,402 167,430 95,801 -69,777" c={FACE} s={BK} />
        <F p="60,434 115,442 112,460 50,450" c="#8a0808" />
        <F p="45,452 112,460 90,590 23,580" c="#e60a0a" />
        <F p="40,485 106,492 100,520 34,512" c="#f80c0c" />
        <L p="52,462 102,467" s="#600" w={1} d="3 2" />
        <L p="45,523 95,530" s="#600" w={1} d="3 2" />
        <F p="10,597 103,608 98,650 5,640" c="#8a0808" />
        <F p="3,640 98,650 78,755 -15,742" c="#e60a0a" />
        <L p="5,655 88,668" s="#700" w={1} />
        <L p="6,692 16,679 40,671 64,680 76,697" s="#700" w={2} />
        <L p="25,704 80,711" s="#700" w={2} />
        <E x={48} y={433} rx={16} ry={14} c="url(#ball)" />
        <E x={11} y={594} rx={20} ry={18} c="url(#ball)" />
        <F p="168,440 222,448 150,805 100,795" c={POST} />
        <F p="220,448 258,456 252,495 215,498" c="#6c6c6c" />
        <L p="258,456 252,495" />
        <F p="212,498 228,498 147,885 152,800" c="#4a4f52" />
        <F p="228,498 577,493 482,863 147,885" c={DOORW} s={BK} w={2} />
        <E x={365} y={694} rx={90} ry={76} r={-28} />
        <F p="240,638 285,636 302,652 300,740 285,742 278,772 235,774 217,755" c={BK} />
        <F p="578,500 617,507 523,865 485,860" c={POST} />
        <F p="745,528 905,552 898,580" c="#e808e8" />
        <F p="920,556 985,562 870,920 852,912 835,990 800,962" c={POST} />
        <F p="917,556 928,557 920,590 905,580" c="#3c4042" />
        <F p="617,493 920,587 802,963 523,865" c={DOOR} />
        <L p="617,493 920,587 802,963 523,865" w={2} />
        <F p="790,694 830,708 796,822 780,835 737,822 770,705" c={BK} />
        <F p="990,554 1165,580 1040,945 873,920" c={FACE} s={BK} />
      </Right>

      {/* axis cross */}
      <g transform="translate(1200 971) scale(.333333)">
        <L p="467,190 435,390" s="#208020" w={2} />
        <F p="489,60 513,187 467,192 427,173" c="#208020" />
        <L p="435,390 645,424" s="#802020" w={2} />
        <F p="658,390 757,444 640,459 644,408" c="#802020" />
        <L p="435,390 423,465" s="#202080" w={2} />
        <F p="421,464 462,513 402,582 367,495" c="#202080" />
        <g fill="#d2d200" fontSize="28" fontFamily="Liberation Sans, sans-serif">
          <text x="497" y="62">Y</text>
          <text x="760" y="444">X</text>
          <text x="407" y="582">Z</text>
        </g>
      </g>
    </svg>
  );
}

/* ---------- shell ---------- */
const Logo = () => (
  <svg viewBox="0 0 20 20" className="size-5 shrink-0">
    <path d="M0 3h12l-4 5 3 3-3 9H0z" fill="#ff0000" />
    <path d="M9 0h11v17l-9 1 3-8-3-3 3-4H9z" fill="#0a0a0a" />
    <path d="M13 3 8 8l4 3-3 7 6-8-4-3z" fill="#fff" />
  </svg>
);

const Small = ({ kind, label }) => (
  <button aria-label={label}>
    <svg viewBox="0 0 12 12" className="size-3" fill="none" stroke="#555">
      <rect x=".5" y=".5" width="11" height="11" rx="2" />
      {kind === "min" && <path d="M3 6h6" strokeWidth="2" />}
      {kind === "res" && <path d="M5 5V3h4v4H7M3 5h4v4H3z" />}
      {kind === "x" && <path d="M3.500 3.500l5 5M8.500 3.500l-5 5" strokeWidth="2" />}
    </svg>
  </button>
);

const DockTitle = ({ children }) => (
  <div className="flex h-[21px] shrink-0 items-center justify-between pl-[2px]">
    <h2 className="text-[14px]">{children}</h2>
    <span className="flex gap-[2px]">
      <Small kind="res" label={children + " lösen"} />
      <Small kind="x" label={children + " schließen"} />
    </span>
  </div>
);

const MENU = ["Datei", "Bearbeiten", "Auslegung", "Funktionseinheiten", "Gehäuse", "Analyse", "Extras", "Produktioninfo", "Ansicht", "Fenster", "Hilfe"];

export default function App() {
  return (
    <div className={"flex h-screen flex-col overflow-hidden bg-[#efefef] text-black " + UI}>
      <header className="flex h-[28px] shrink-0 items-center justify-between bg-gradient-to-r from-[#f2f4fb] to-[#eef4ed] pr-[3px] pl-[2px]">
        <h1 className="flex items-center gap-[6px] text-[15px]">
          <Logo />
          Klim@Soft Geräte-Editor - NW-14 - 1: 2026-06-03 AM - [Perspektivische Ansicht]
        </h1>
        <div className="flex">
          {[
            ["Minimieren", "M0 6.500h12"],
            ["Wiederherstellen", "M.5 3.500h8v8h-8zM3 3V1h8.500v8.500H9"],
            ["Schließen", "M.5.5l11 11M11.500.5l-11 11"],
          ].map(([l, d]) => (
            <button key={l} aria-label={l} className="flex h-[28px] w-[58px] items-center justify-center">
              <svg viewBox="0 0 12 12" className="size-3" fill="none" stroke="#111">
                <path d={d} />
              </svg>
            </button>
          ))}
        </div>
      </header>

      <div className="flex h-[25px] shrink-0 items-center justify-between pr-[1px]">
        <nav className="flex items-center text-[14px]">
          <Logo />
          <div className="flex gap-[15px] pl-[8px]">
            {MENU.map((m) => (
              <button key={m}>{m}</button>
            ))}
          </div>
        </nav>
        <div className="flex gap-[1px]">
          {["min", "res", "x"].map((k) => (
            <span key={k} className="flex h-[23px] w-[23px] items-center justify-center rounded-[3px] border border-[#b0b0b0] bg-[#f8f8f8]">
              <Small kind={k} label={"Dokument " + k} />
            </span>
          ))}
        </div>
      </div>

      <Toolbar />

      <main className="flex min-h-0 flex-1">
        <aside className="mt-[1px] mb-[20px] flex w-[591px] shrink-0 flex-col pl-[2px]">
          <DockTitle>Materialfenster</DockTitle>
          <div className="flex min-h-0 flex-1 flex-col border border-[#b4b4b4] bg-white">
            <div className="flex h-[24px] shrink-0 items-center border-b border-[#b4b4b4] bg-gradient-to-b from-white to-[#ececec] pl-[1px] text-[13px]">
              240019/15/1: 2026-06-03 AM - AT4-F 12x6 / 12x6 - Innenraum
            </div>
            <ul className="min-h-0 flex-1 overflow-hidden text-[14px]">
              {TREE.map((r, i) => (
                <TreeRow key={i} row={r} />
              ))}
            </ul>
            <div className="flex h-[18px] shrink-0 border-t border-[#b4b4b4] bg-[#e4e4e4]">
              <button aria-label="Nach links" className="flex w-[17px] items-center justify-center border-r border-[#b4b4b4] bg-[#f8f8f8]">
                <Tri dir="l" />
              </button>
              <div className="w-[49%] border-r border-[#b4b4b4] bg-gradient-to-b from-white to-[#f0f0f0]" />
              <div className="flex-1" />
              <button aria-label="Nach rechts" className="flex w-[17px] items-center justify-center border-l border-[#b4b4b4] bg-[#f8f8f8]">
                <Tri dir="r" />
              </button>
            </div>
          </div>
        </aside>

        <div className="flex w-[10px] shrink-0 items-center justify-center">
          <span className="h-[18px] w-[4px] border-x border-dotted border-[#b0b0b0]" />
        </div>

        <section className="mt-[1px] min-w-0 flex-1 border-r border-b border-white bg-[#6d6a82]">
          <Scene />
        </section>

        <aside className="mt-[1px] mb-[20px] ml-[9px] flex w-[448px] shrink-0 flex-col pr-[2px]">
          <DockTitle>Materialeigenschaften</DockTitle>
          <div className="flex min-h-0 flex-1 border border-[#c4c4c4] bg-white">
            <div className="min-w-0 flex-1 overflow-hidden">
              <PropTable />
            </div>
            <div className="flex w-[18px] shrink-0 flex-col border-l-2 border-[#b8b8b8] bg-[#e4e4e4]">
              <button aria-label="Nach oben" className="flex h-[17px] items-center justify-center border-b border-[#b4b4b4] bg-[#f8f8f8]">
                <Tri dir="u" />
              </button>
              <div className="h-[39%] border-b border-[#b4b4b4] bg-gradient-to-r from-white to-[#f0f0f0]" />
              <div className="flex-1" />
              <button aria-label="Nach unten" className="flex h-[17px] items-center justify-center border-t border-[#b4b4b4] bg-[#f8f8f8]">
                <Tri dir="d" />
              </button>
            </div>
          </div>
        </aside>
      </main>

      <footer className={"flex h-[32px] shrink-0 items-center justify-end gap-[12px] pt-[2px] pr-[4px] text-[13px] whitespace-nowrap " + TAHOMA}>
        <span className="flex h-[25px] w-[80px] items-center justify-center bg-[#ff0000]">BT</span>
        <span>22.261 EUR</span>
        <span>KW 40</span>
        <span>A+/A+</span>
        <span>A+</span>
        <span>1.791 W/(m³/s)</span>
        <span>Konform 2018</span>
        <span>3.060 mm x 994 mm x 1.300 mm</span>
        <span>900 kg</span>
      </footer>
    </div>
  );
}
